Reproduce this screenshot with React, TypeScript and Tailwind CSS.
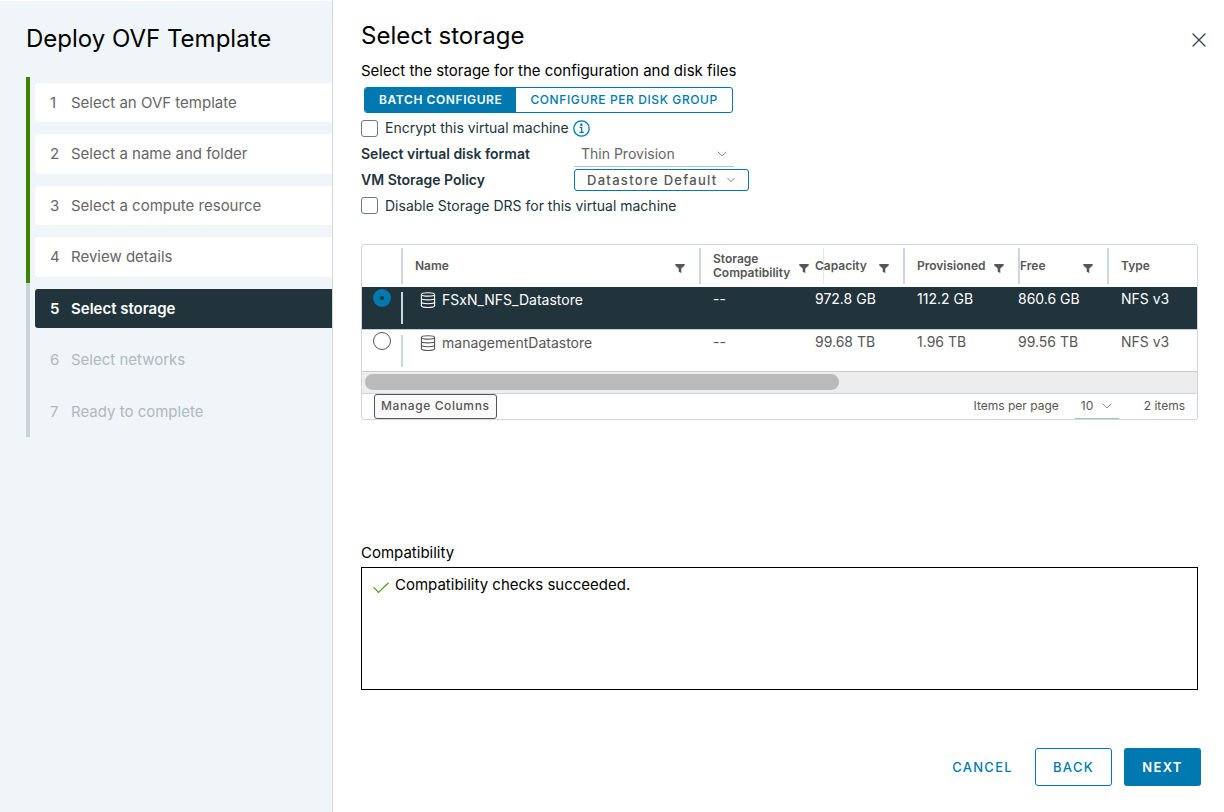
import React from "react";

const steps = [
  { label: "Select an OVF template", state: "done" },
  { label: "Select a name and folder", state: "done" },
  { label: "Select a compute resource", state: "done" },
  { label: "Review details", state: "done" },
  { label: "Select storage", state: "current" },
  { label: "Select networks", state: "todo" },
  { label: "Ready to complete", state: "todo" },
];

const stepStyles: Record<string, { item: string; button: string }> = {
  done: { item: "border-[#3c8500]", button: "bg-white text-[#666666]" },
  current: { item: "border-[#c8d3d7]", button: "bg-[#21333b] font-semibold text-white" },
  todo: { item: "border-[#c8d3d7]", button: "text-[#b0b9bd]" },
};

const datastores = [
  { name: "FSxN_NFS_Datastore", capacity: "972.8 GB", provisioned: "112.2 GB", free: "860.6 GB", type: "NFS v3" },
  { name: "managementDatastore", capacity: "99.68 TB", provisioned: "1.96 TB", free: "99.56 TB", type: "NFS v3" },
];

function FilterButton({ column, edge }: { column: string; edge: string }) {
  return (
    <button type="button" aria-label={`Filter ${column}`} className={`mt-1 ml-auto shrink-0 ${edge}`}>
      <svg width="10" height="9" viewBox="0 0 10 9" fill="#565656" aria-hidden="true">
        <path d="M0.3 0h9.4v1.4L6.3 4.6V9L3.7 7.8V4.6L0.3 1.4z" />
      </svg>
    </button>
  );
}

function Chevron({ className, size }: { className: string; size: number }) {
  return (
    <svg
      className={`pointer-events-none absolute top-1/2 -translate-y-1/2 ${className}`}
      width={size}
      height={size}
      viewBox="0 0 10 10"
      fill="none"
      stroke="currentColor"
      strokeLinecap="round"
      strokeLinejoin="round"
      aria-hidden="true"
    >
      <path d="M1 3l4 4 4-4" />
    </svg>
  );
}

function DatastoreIcon() {
  return (
    <svg width="16" height="16" viewBox="0 0 16 16" fill="none" stroke="currentColor" strokeWidth="1.1" aria-hidden="true" className="shrink-0">
      <ellipse cx="8" cy="2.4" rx="6.6" ry="1.7" />
      <path d="M1.4 2.4v11.4c0 1 3 1.7 6.6 1.7s6.6-0.7 6.6-1.7V2.4" />
      <path d="M1.4 6.2c0 1 3 1.7 6.6 1.7s6.6-0.7 6.6-1.7M1.4 10c0 1 3 1.7 6.6 1.7s6.6-0.7 6.6-1.7" />
    </svg>
  );
}

function HeaderCell({
  label,
  divider = "border-l-2 border-[#cbd8dc]",
  pad,
  edge,
  children,
}: {
  label: string;
  divider?: string;
  pad: string;
  edge?: string;
  children?: React.ReactNode;
}) {
  return (
    <th scope="col" className="p-0 text-left align-middle font-semibold">
      <div className={`relative flex h-9 items-center leading-[14px] ${divider} ${pad}`}>
        {children}
        <span className="relative">{label}</span>
        {edge !== undefined && <FilterButton column={label} edge={edge} />}
      </div>
    </th>
  );
}

const checkbox = "size-[17px] shrink-0 appearance-none rounded-[3px] border border-[#6b7a82] bg-white checked:bg-[#0079b0]";

export default function App() {
  return (
    <div className="flex min-h-screen bg-white font-['Inter','Open_Sans',sans-serif] text-sm text-black">
      <aside className="w-[333px] shrink-0 border-t border-r border-t-white border-r-[#cfdadf] bg-[#eff5f8]">
        <h1 className="pt-[21px] pl-[26px] text-2xl leading-[34px]">Deploy OVF Template</h1>
        <ol className="mt-[21px] ml-[26px] flex h-[360px] flex-col">
          {steps.map((step, i) => (
            <li key={step.label} className={`flex flex-1 border-l-4 py-1.5 pl-[5px] ${stepStyles[step.state].item}`}>
              <button
                type="button"
                disabled={step.state === "todo"}
                aria-current={step.state === "current" ? "step" : undefined}
                className={`flex w-full items-center rounded-l-[3px] pl-[15px] text-left text-[15px] ${stepStyles[step.state].button}`}
              >
                <span className="w-[21px]">{i + 1}</span>
                <span>{step.label}</span>
              </button>
            </li>
          ))}
        </ol>
      </aside>

      <main className="flex min-w-0 flex-1 flex-col pl-7">
        <header className="flex items-start justify-between pt-5 pr-[18px]">
          <h2 className="text-2xl leading-8">Select storage</h2>
          <button type="button" aria-label="Close" className="mt-[13px]">
            <svg width="14" height="14" viewBox="0 0 14 14" stroke="#314351" strokeWidth="1.3" strokeLinecap="round" aria-hidden="true">
              <path d="M1 1l12 12M13 1L1 13" />
            </svg>
          </button>
        </header>

        <form className="flex flex-1 flex-col" onSubmit={(e) => e.preventDefault()}>
          <p className="mt-[7px] text-[15px] leading-6">Select the storage for the configuration and disk files</p>

          <div className="mt-1 ml-[3px] flex h-[26px] w-fit overflow-hidden rounded-[3px] border border-[#0079b0] text-xs tracking-wider">
            <button type="button" aria-pressed="true" className="bg-[#0079b0] px-3.5 font-semibold text-white">
              BATCH CONFIGURE
            </button>
            <button type="button" aria-pressed="false" className="px-3.5 font-medium text-[#0079b0]">
              CONFIGURE PER DISK GROUP
            </button>
          </div>

          <div className="mt-0.5 flex h-[26px] items-center text-[#21333b]">
            <input id="encrypt" type="checkbox" className={checkbox} />
            <label htmlFor="encrypt" className="pl-[7px]">Encrypt this virtual machine</label>
            <button type="button" aria-label="About encryption" className="ml-1 text-[#0079b0]">
              <svg width="17" height="17" viewBox="0 0 17 17" fill="none" stroke="currentColor" strokeWidth="1.3" aria-hidden="true">
                <circle cx="8.5" cy="8.5" r="7.7" />
                <path d="M6.6 7.4h2.1v4.8M6.4 12.3h4.4" />
                <circle cx="8.4" cy="4.8" r="0.6" fill="currentColor" />
              </svg>
            </button>
          </div>

          <div className="flex h-[26px] items-center">
            <label htmlFor="disk-format" className="w-[213px] font-semibold text-[#21333b]">Select virtual disk format</label>
            <div className="relative h-[26px] w-40 border-b border-[#b3bdc2] text-[#666666]">
              <select id="disk-format" className="size-full appearance-none bg-transparent pl-[7px]">
                <option>Thin Provision</option>
              </select>
              <Chevron className="right-[7px] text-[#8c8c8c]" size={10} />
            </div>
          </div>

          <div className="flex h-[26px] items-center">
            <label htmlFor="policy" className="w-[213px] font-semibold text-[#21333b]">VM Storage Policy</label>
            <div className="relative h-[22px] w-[175px] text-[#565656]">
              <select id="policy" className="size-full appearance-none rounded-[3px] border border-[#0079b0] bg-transparent pl-3 text-[13px] font-medium tracking-widest">
                <option>Datastore Default</option>
              </select>
              <Chevron className="right-3.5" size={8} />
            </div>
          </div>

          <div className="flex h-[25px] items-center text-[#21333b]">
            <input id="drs" type="checkbox" className={checkbox} />
            <label htmlFor="drs" className="pl-[7px]">Disable Storage DRS for this virtual machine</label>
          </div>

          <section className="mt-[26px] mr-[26px] overflow-hidden rounded-[3px] border border-[#cbd8dc] text-[#565656]">
            <table className="w-full table-fixed border-collapse">
              <colgroup>
                <col className="w-[39px]" />
                <col />
                <col className="w-[116px]" />
                <col className="w-[88px]" />
                <col className="w-[115px]" />
                <col className="w-[89px]" />
                <col className="w-[90px]" />
              </colgroup>
              <thead className="text-[12px]">
                <tr className="h-[42px]">
                  <th scope="col" className="p-0" aria-label="Selection" />
                  <HeaderCell label="Name" pad="pl-3" edge="mr-3.5" />
                  <HeaderCell label="Storage Compatibility" pad="pl-3" edge="mr-1.5" />
                  <HeaderCell label="Capacity" divider="" pad="" edge="mr-3.5">
                    <span className="absolute inset-y-0 left-2 w-px bg-[#e1e9ec]" />
                  </HeaderCell>
                  <HeaderCell label="Provisioned" pad="pl-3" edge="mr-3.5" />
                  <HeaderCell label="Free" pad="" edge="mr-3.5" />
                  <HeaderCell label="Type" pad="pl-3" />
                </tr>
              </thead>
              <tbody className="text-sm leading-[18px]">
                {datastores.map((row, i) => (
                  <tr
                    key={row.name}
                    className={`h-[42px] border-b border-[#c4cccf] align-top ${i === 0 ? "bg-[#21333b] text-white" : ""}`}
                  >
                    <td className="p-0 pt-0.5 pl-[11px]">
                      <input
                        type="radio"
                        name="datastore"
                        aria-label={row.name}
                        defaultChecked={i === 0}
                        className="block size-[18px] appearance-none rounded-full border border-[#565656] bg-white checked:border-[7px] checked:border-[#0079b0] checked:bg-[#21333b]"
                      />
                    </td>
                    <td className="p-0 pt-[5px]">
                      <div className="flex h-8 items-start border-l-2 border-[#cbd8dc] pl-[17px] leading-4">
                        <DatastoreIcon />
                        <span className="pl-1.5">{row.name}</span>
                      </div>
                    </td>
                    <td className="p-0 pt-[3px] pl-3.5">--</td>
                    <td className="p-0 pt-[3px]">{row.capacity}</td>
                    <td className="p-0 pt-[3px] pl-3.5">{row.provisioned}</td>
                    <td className="p-0 pt-[3px]">{row.free}</td>
                    <td className="p-0 pt-[3px] pl-3.5">{row.type}</td>
                  </tr>
                ))}
              </tbody>
            </table>
            <div className="flex h-[22px] items-center border-b border-[#cbd8dc] bg-[#ededed] px-[3px]">
              <div className="h-4 w-4/7 rounded-full bg-[#bababa]" />
            </div>
            <div className="flex h-[25px] items-center text-xs">
              <button type="button" className="ml-3 h-[25px] rounded-[3px] border border-[#565656] bg-[#fafafa] px-1.5 font-medium tracking-wider">
                Manage Columns
              </button>
              <label htmlFor="page-size" className="ml-auto">Items per page</label>
              <div className="relative mr-[25px] ml-4 h-[25px] w-11 border-b border-[#b3bdc2]">
                <select id="page-size" className="size-full appearance-none bg-transparent pl-1.5">
                  <option>10</option>
                </select>
                <Chevron className="right-[7px] text-[#8c8c8c]" size={10} />
              </div>
              <span className="pr-3">2 items</span>
            </div>
          </section>

          <section className="mt-[122px] mr-[26px] text-[15px]">
            <h3 className="leading-[22px]">Compatibility</h3>
            <div className="mt-[3px] flex h-[123px] items-start border border-black pt-2 pl-[11px]">
              <svg width="16" height="12" viewBox="0 0 16 12" fill="none" stroke="#4f9d16" strokeWidth="1.2" className="mt-1.5" aria-hidden="true">
                <path d="M0.5 5.2l5 5.2L15.5 0.8" />
              </svg>
              <p className="pl-1.5 leading-[18px]">Compatibility checks succeeded.</p>
            </div>
          </section>

          <footer className="mt-auto mr-[23px] flex justify-end gap-3 pt-6 pb-[26px] text-[13px] tracking-widest">
            <button type="button" className="h-[38px] px-2.5 font-medium text-[#0079b0]">CANCEL</button>
            <button type="button" className="h-[38px] w-[77px] rounded-[3px] border border-[#0079b0] font-medium text-[#0079b0]">BACK</button>
            <button type="submit" className="h-[38px] w-[77px] rounded-[3px] bg-[#0079b0] font-semibold text-white">NEXT</button>
          </footer>
        </form>
      </main>
    </div>
  );
}
